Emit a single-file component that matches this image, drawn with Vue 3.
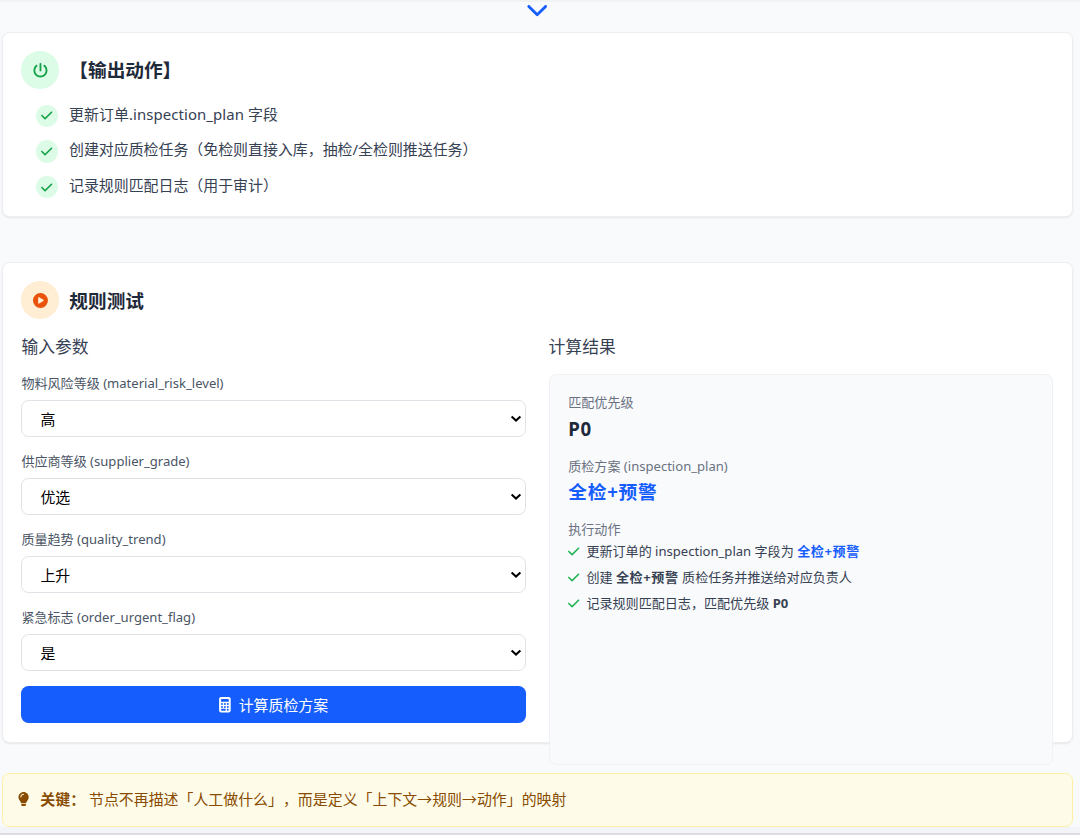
<template>
  <div class="page">
    <div class="connector">
      <svg class="chevron" viewBox="0 0 512 512"><path :d="icons.chevron" /></svg>
    </div>

    <!-- 输出动作 -->
    <section class="card">
      <div class="card-header">
        <span class="badge green">
          <svg viewBox="0 0 512 512"><path :d="icons.power" /></svg>
        </span>
        <h2>【输出动作】</h2>
      </div>
      <ul class="actions">
        <li v-for="item in actions" :key="item">
          <span class="tick"><svg viewBox="0 0 448 512"><path :d="icons.check" /></svg></span>
          <span>{{ item }}</span>
        </li>
      </ul>
    </section>

    <!-- 规则测试 -->
    <section class="card test-card">
      <div class="card-header">
        <span class="badge orange">
          <svg viewBox="0 0 512 512"><path :d="icons.play" /></svg>
        </span>
        <h2>规则测试</h2>
      </div>
      <div class="columns">
        <form @submit.prevent="calculate">
          <h3>输入参数</h3>
          <div v-for="field in fields" :key="field.key" class="field">
            <label :for="field.key">{{ field.label }} ({{ field.key }})</label>
            <div class="select-wrap">
              <select :id="field.key" v-model="field.value">
                <option v-for="opt in field.options" :key="opt">{{ opt }}</option>
              </select>
              <svg class="arrow" viewBox="0 0 12 8"><path d="M1.6 1.6L6 5.6L10.4 1.6" /></svg>
            </div>
          </div>
          <button type="submit">
            <svg viewBox="0 0 384 512"><path fill-rule="evenodd" :d="icons.calculator" /></svg>
            <span>计算质检方案</span>
          </button>
        </form>

        <div class="result-column">
          <h3>计算结果</h3>
          <div class="result">
            <div class="block">
              <div class="caption">匹配优先级</div>
              <div class="value">{{ result.priority }}</div>
            </div>
            <div class="block">
              <div class="caption">质检方案 (inspection_plan)</div>
              <div class="value blue">{{ result.plan }}</div>
            </div>
            <div class="caption">执行动作</div>
            <ul>
              <li>
                <svg viewBox="0 0 448 512"><path :d="icons.check" /></svg>
                <span>更新订单的 inspection_plan 字段为 <b class="blue">{{ result.plan }}</b></span>
              </li>
              <li>
                <svg viewBox="0 0 448 512"><path :d="icons.check" /></svg>
                <span>创建 <b>{{ result.plan }}</b> 质检任务并推送给对应负责人</span>
              </li>
              <li>
                <svg viewBox="0 0 448 512"><path :d="icons.check" /></svg>
                <span>记录规则匹配日志，匹配优先级 <b>{{ result.priority }}</b></span>
              </li>
            </ul>
          </div>
        </div>
      </div>
    </section>

    <div class="note">
      <svg viewBox="0 0 384 512"><path :d="icons.bulb" /></svg>
      <p><b>关键：</b> 节点不再描述「人工做什么」，而是定义「上下文→规则→动作」的映射</p>
    </div>
    <div class="footer-line"></div>
  </div>
</template>

<script setup>
import { reactive } from 'vue';

const actions = [
  '更新订单.inspection_plan 字段',
  '创建对应质检任务（免检则直接入库，抽检/全检则推送任务）',
  '记录规则匹配日志（用于审计）',
];

const fields = reactive([
  { key: 'material_risk_level', label: '物料风险等级', value: '高', options: ['高', '中', '低'] },
  { key: 'supplier_grade', label: '供应商等级', value: '优选', options: ['优选', '合格', '待改进'] },
  { key: 'quality_trend', label: '质量趋势', value: '上升', options: ['上升', '稳定', '下降'] },
  { key: 'order_urgent_flag', label: '紧急标志', value: '是', options: ['是', '否'] },
]);

const result = reactive({ priority: 'P0', plan: '全检+预警' });

// 高风险物料全检并预警，其余按抽检处理
const calculate = () => {
  const high = fields[0].value === '高';
  result.priority = high ? 'P0' : 'P1';
  result.plan = high ? '全检+预警' : '抽检';
};

const icons = {
  chevron: 'M233.4 406.6c12.5 12.5 32.8 12.5 45.3 0l192-192c12.5-12.5 12.5-32.8 0-45.3s-32.8-12.5-45.3 0L256 338.7 86.6 169.4c-12.5-12.5-32.8-12.5-45.3 0s-12.5 32.8 0 45.3l192 192z',
  power: 'M288 32c0-17.7-14.3-32-32-32s-32 14.3-32 32V256c0 17.7 14.3 32 32 32s32-14.3 32-32V32zM143.5 120.6c13.6-11.3 15.4-31.5 4.1-45.1s-31.5-15.4-45.1-4.1C49.7 115.4 16 181.8 16 256c0 132.5 107.5 240 240 240s240-107.5 240-240c0-74.2-33.8-140.6-86.6-184.6c-13.6-11.3-33.8-9.4-45.1 4.1s-9.4 33.8 4.1 45.1c38.9 32.3 63.5 81 63.5 135.4c0 97.2-78.8 176-176 176s-176-78.8-176-176c0-54.4 24.7-103.1 63.5-135.4z',
  check: 'M438.6 105.4c12.5 12.5 12.5 32.8 0 45.3l-256 256c-12.5 12.5-32.8 12.5-45.3 0l-128-128c-12.5-12.5-12.5-32.8 0-45.3s32.8-12.5 45.3 0L160 338.7 393.4 105.4c12.5-12.5 32.8-12.5 45.3 0z',
  play: 'M0 256a256 256 0 1 1 512 0A256 256 0 1 1 0 256zM188.3 147.1c-7.6 4.2-12.3 12.3-12.3 20.9V344c0 8.7 4.7 16.7 12.3 20.9s16.8 4.1 24.3-.5l144-88c7.1-4.4 11.5-12.1 11.5-20.5s-4.4-16.1-11.5-20.5l-144-88c-7.4-4.5-16.7-4.7-24.3-.5z',
  calculator: 'M64 0C28.7 0 0 28.7 0 64V448c0 35.3 28.7 64 64 64H320c35.3 0 64-28.7 64-64V64c0-35.3-28.7-64-64-64H64zM96 64H288c17.7 0 32 14.3 32 32v32c0 17.7-14.3 32-32 32H96c-17.7 0-32-14.3-32-32V96c0-17.7 14.3-32 32-32z'
    + 'M64 232a32 32 0 1 1 64 0a32 32 0 1 1-64 0zM160 232a32 32 0 1 1 64 0a32 32 0 1 1-64 0zM256 232a32 32 0 1 1 64 0a32 32 0 1 1-64 0z'
    + 'M64 328a32 32 0 1 1 64 0a32 32 0 1 1-64 0zM160 328a32 32 0 1 1 64 0a32 32 0 1 1-64 0zM256 328a32 32 0 1 1 64 0a32 32 0 1 1-64 0z'
    + 'M96 392H192a32 32 0 0 1 0 64H96a32 32 0 0 1 0-64zM256 424a32 32 0 1 1 64 0a32 32 0 1 1-64 0z',
  bulb: 'M272 384c9.6-31.9 29.5-59.1 49.2-86.2l0 0c5.2-7.1 10.4-14.2 15.4-21.4c19.8-28.5 31.4-63 31.4-100.3C368 78.8 289.2 0 192 0S16 78.8 16 176c0 37.3 11.6 71.9 31.4 100.3c5 7.2 10.2 14.3 15.4 21.4l0 0c19.8 27.1 39.7 54.4 49.2 86.2H272zM192 512c44.2 0 80-35.8 80-80V416H112v16c0 44.2 35.8 80 80 80zM112 176c0 8.8-7.2 16-16 16s-16-7.2-16-16c0-61.9 50.1-112 112-112c8.8 0 16 7.2 16 16s-7.2 16-16 16c-44.2 0-80 35.8-80 80z',
};
</script>

<style>
body {
  background: #f9fafb;
}
</style>

<style scoped>
.page {
  box-sizing: border-box;
  height: 835px;
  overflow: hidden;
  display: flex;
  flex-direction: column;
  font-family: "Noto Sans", "Noto Sans CJK SC", sans-serif;
  font-size: 14.93px;
  text-spacing-trim: space-all;
  color: #364153;
  background: #f9fafc;
}

.page * {
  box-sizing: border-box;
}

svg {
  display: block;
  flex: none;
  fill: currentColor;
}

h2, h3, p, ul {
  margin: 0;
  padding: 0;
}

ul {
  list-style: none;
}

.connector {
  flex: none;
  height: 32px;
  border-top: 2px solid #f1f2f4;
  display: flex;
  justify-content: center;
  padding-right: 5px;
}

.chevron {
  width: 22.4px;
  height: 22.4px;
  margin-top: -3.8px;
  color: #155dfc;
}

.card {
  flex: none;
  height: 185px;
  margin: 0 7px 0 2px;
  padding: 18.4px 18.67px 18px 18.4px;
  background: #fff;
  border: 1px solid #eceef1;
  border-radius: 7.5px;
  box-shadow: 0 1px 2px rgba(0, 0, 0, 0.08);
}

.test-card {
  height: 481px;
  margin-top: 45px;
}

.card-header {
  display: flex;
  align-items: center;
  gap: 10.6px;
  height: 37.33px;
  margin-bottom: 14.93px;
}

.card-header h2 {
  font-size: 18.67px;
  line-height: 26px;
  font-weight: 700;
  color: #1e2939;
}

.test-card h2 {
  padding-top: 1.4px;
}

.badge {
  width: 37.33px;
  height: 37.33px;
  border-radius: 50%;
  display: flex;
  align-items: center;
  justify-content: center;
}

.badge svg {
  width: 14.93px;
  height: 14.93px;
}

.green {
  background: #dcfce7;
  color: #16a34a;
}

.orange {
  background: #ffedd4;
  color: #e8520a;
}

.actions {
  padding-left: 14.6px;
}

.actions li {
  display: flex;
  gap: 10.6px;
  height: 24.3px;
  margin-bottom: 11.4px;
  line-height: 20.2px;
}

.actions li:first-child {
  letter-spacing: 0.08px;
}

.tick {
  width: 22.4px;
  height: 22.4px;
  margin-top: 1px;
  border-radius: 50%;
  background: #dcfce7;
  color: #16a34a;
  display: flex;
  align-items: center;
  justify-content: center;
}

.tick svg {
  width: 11.4px;
  height: 13px;
}

.columns {
  display: grid;
  grid-template-columns: 1fr 1fr;
  gap: 22.4px;
}

h3 {
  height: 26.1px;
  margin-bottom: 14.3px;
  font-size: 16.8px;
  line-height: 26.8px;
  font-weight: 400;
}

.field {
  margin-bottom: 14.8px;
}

label {
  display: block;
  height: 18.67px;
  margin-bottom: 7.4px;
  font-size: 13.07px;
  line-height: 18.67px;
  color: #4a5565;
}

.select-wrap {
  position: relative;
}

select {
  display: block;
  appearance: none;
  width: 100%;
  height: 37.2px;
  padding: 0 30px 0 18px;
  border: 1px solid #dfe2e6;
  border-radius: 7.5px;
  background: #fff;
  color: #000;
  font-family: inherit;
  font-size: 14.93px;
}

/* стрелка поверх поля */
.arrow {
  position: absolute;
  top: 15px;
  right: 4.5px;
  width: 12px;
  height: 8px;
  fill: none;
  stroke: #000;
  stroke-width: 2;
  pointer-events: none;
}

button {
  width: 100%;
  height: 37.3px;
  padding: 0;
  border: none;
  border-radius: 7.5px;
  background: #155dfc;
  color: #fff;
  display: flex;
  align-items: center;
  justify-content: center;
  gap: 7.5px;
  font-family: inherit;
  font-size: 14.93px;
  cursor: pointer;
}

button svg {
  width: 11.8px;
  height: 15.5px;
}

.result-column {
  height: 390.6px;
}

.result {
  height: 100%;
  padding: 18.3px 18.67px;
  background: #f9fafc;
  border: 1px solid #eff1f4;
  border-radius: 7.5px;
  font-size: 13.07px;
}

.block {
  margin-bottom: 15px;
}

.caption {
  margin-bottom: 3.6px;
  line-height: 18.67px;
  color: #6a7282;
}

.value {
  font-size: 18.67px;
  line-height: 26px;
  font-weight: 700;
  letter-spacing: 0.8px;
  color: #1e2939;
}

.value.blue, .blue {
  color: #155dfc;
}

.result li {
  display: flex;
  align-items: center;
  gap: 6.8px;
  height: 18.67px;
  margin-bottom: 7.47px;
  line-height: 18.67px;
}

.result li b {
  letter-spacing: 0.6px;
}

.result li:last-child b {
  letter-spacing: 0;
}

.result li svg {
  width: 11.4px;
  height: 13px;
  color: #22b455;
}

.note {
  flex: none;
  height: 54px;
  margin: 30px 7px 0 2px;
  padding: 0 14.93px 3px;
  display: flex;
  align-items: center;
  gap: 11.2px;
  background: #fefce8;
  border: 1px solid #fdf0a4;
  border-radius: 7.5px;
  color: #894b00;
}

.note svg {
  width: 11.2px;
  height: 14.93px;
  margin-top: 1px;
}

.footer-line {
  flex: none;
  height: 8px;
  background: #f3f4f7;
  border-bottom: 2px solid #dcdde0;
}
</style>
